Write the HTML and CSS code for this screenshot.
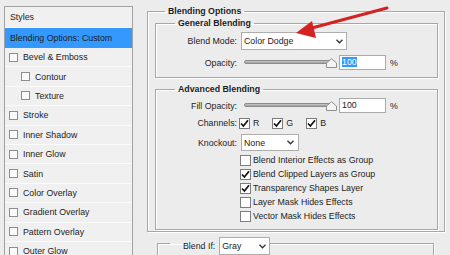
FILE: index.html
```html
<!DOCTYPE html>
<html lang="en">
<head>
    <meta charset="UTF-8">
    <meta name="viewport" content="width=device-width, initial-scale=1.0">
    <title>Layer Style - Blending Options</title>
    <link rel="stylesheet" href="styles.css">
</head>
<body>
    <div class="dialog">
        <div class="styles-panel">
            <div class="panel-head">Styles</div>
            <div class="style-item active">Blending Options: Custom</div>
            <div class="style-item"><span class="box"></span>Bevel &amp; Emboss</div>
            <div class="style-item sub"><span class="box"></span>Contour</div>
            <div class="style-item sub"><span class="box"></span>Texture</div>
            <div class="style-item"><span class="box"></span>Stroke</div>
            <div class="style-item"><span class="box"></span>Inner Shadow</div>
            <div class="style-item"><span class="box"></span>Inner Glow</div>
            <div class="style-item"><span class="box"></span>Satin</div>
            <div class="style-item"><span class="box"></span>Color Overlay</div>
            <div class="style-item"><span class="box"></span>Gradient Overlay</div>
            <div class="style-item"><span class="box"></span>Pattern Overlay</div>
            <div class="style-item"><span class="box"></span>Outer Glow</div>
        </div>

        <div class="options">
            <fieldset class="group outer">
                <legend>Blending Options</legend>

                <fieldset class="group inner general">
                    <legend>General Blending</legend>
                    <div class="row row-select">
                        <span class="row-label">Blend Mode:</span>
                        <div class="select mode">Color Dodge
                            <svg width="7" height="5" viewBox="0 0 7 5"><polyline points="0.5,0.8 3.5,3.8 6.5,0.8" fill="none" stroke="#333" stroke-width="1.3"/></svg>
                        </div>
                    </div>
                    <div class="row row-slider first">
                        <span class="row-label">Opacity:</span>
                        <div class="slider">
                            <div class="track"></div>
                            <svg class="thumb" width="11" height="10" viewBox="0 0 11 10"><path d="M0.5 9.5 V5 L5.5 0.7 L10.5 5 V9.5 Z" fill="#f4f4f4" stroke="#8f8f8f"/></svg>
                        </div>
                        <div class="num"><span class="selected">100</span></div>
                        <span class="pct">%</span>
                    </div>
                </fieldset>

                <fieldset class="group inner advanced">
                    <legend>Advanced Blending</legend>
                    <div class="row row-slider">
                        <span class="row-label">Fill Opacity:</span>
                        <div class="slider">
                            <div class="track"></div>
                            <svg class="thumb" width="11" height="10" viewBox="0 0 11 10"><path d="M0.5 9.5 V5 L5.5 0.7 L10.5 5 V9.5 Z" fill="#f4f4f4" stroke="#8f8f8f"/></svg>
                        </div>
                        <div class="num">100</div>
                        <span class="pct">%</span>
                    </div>
                    <div class="row row-channels">
                        <span class="row-label">Channels:</span>
                        <span class="channel"><span class="cb"><svg width="9" height="9" viewBox="0 0 9 9"><polyline points="1,4.5 3.4,7 8,1.3" fill="none" stroke="#111" stroke-width="1.7"/></svg></span>R</span>
                        <span class="channel"><span class="cb"><svg width="9" height="9" viewBox="0 0 9 9"><polyline points="1,4.5 3.4,7 8,1.3" fill="none" stroke="#111" stroke-width="1.7"/></svg></span>G</span>
                        <span class="channel"><span class="cb"><svg width="9" height="9" viewBox="0 0 9 9"><polyline points="1,4.5 3.4,7 8,1.3" fill="none" stroke="#111" stroke-width="1.7"/></svg></span>B</span>
                    </div>
                    <div class="row row-knockout">
                        <span class="row-label">Knockout:</span>
                        <div class="select knockout">None
                            <svg width="7" height="5" viewBox="0 0 7 5"><polyline points="0.5,0.8 3.5,3.8 6.5,0.8" fill="none" stroke="#333" stroke-width="1.3"/></svg>
                        </div>
                    </div>
                    <div class="check-list">
                        <div class="check-row"><span class="cb"></span>Blend Interior Effects as Group</div>
                        <div class="check-row"><span class="cb"><svg width="9" height="9" viewBox="0 0 9 9"><polyline points="1,4.5 3.4,7 8,1.3" fill="none" stroke="#111" stroke-width="1.7"/></svg></span>Blend Clipped Layers as Group</div>
                        <div class="check-row"><span class="cb"><svg width="9" height="9" viewBox="0 0 9 9"><polyline points="1,4.5 3.4,7 8,1.3" fill="none" stroke="#111" stroke-width="1.7"/></svg></span>Transparency Shapes Layer</div>
                        <div class="check-row"><span class="cb"></span>Layer Mask Hides Effects</div>
                        <div class="check-row"><span class="cb"></span>Vector Mask Hides Effects</div>
                    </div>
                </fieldset>
            </fieldset>

            <fieldset class="group blendif">
                <legend>
                    <span class="blendif-label">Blend If:</span>
                    <span class="select gray">Gray
                        <svg width="7" height="5" viewBox="0 0 7 5"><polyline points="0.5,0.8 3.5,3.8 6.5,0.8" fill="none" stroke="#333" stroke-width="1.3"/></svg>
                    </span>
                </legend>
            </fieldset>
        </div>
    </div>

    <svg class="arrow" width="450" height="255" viewBox="0 0 450 255">
        <line x1="387" y1="8" x2="308" y2="29" stroke="#d42222" stroke-width="3" stroke-linecap="round"/>
        <polygon points="296,33 312,21 316,38" fill="#d42222"/>
    </svg>
</body>
</html>
```

FILE: styles.css
```css
* {
    box-sizing: border-box;
}
body {
    position: relative;
    margin: 0;
    width: 450px;
    height: 255px;
    overflow: hidden;
    background-color: #ececec;
    font-family: "Liberation Sans", Arial, sans-serif;
    font-size: 8.8px;
    color: #1c1c1c;
}
.dialog {
    display: flex;
    align-items: flex-start;
    padding: 6px 0 0 4px;
}

/* left list of styles */
.styles-panel {
    flex: none;
    width: 129px;
    border: 1px solid #a2a2a2;
    background-color: #f0f0f0;
}
.panel-head {
    height: 21px;
    line-height: 20px;
    padding-left: 5px;
    border-bottom: 1px solid #fbfbfb;
}
.style-item {
    display: flex;
    align-items: center;
    height: 19.4px;
    padding-left: 4px;
    border-bottom: 1px solid #fbfbfb;
}
.style-item.active {
    height: 20px;
    padding-left: 5px;
    background-color: #3399ff;
    border-bottom: 0;
}
.style-item.sub {
    padding-left: 16px;
}
.box {
    flex: none;
    width: 9px;
    height: 9px;
    margin-right: 5px;
    border: 1px solid #8d8d8d;
    background-color: #fbfbfb;
}

/* right side */
.options {
    flex: none;
    width: 298px;
    margin-left: 14px;
    margin-top: -1px;
}
.group {
    margin: 0;
    padding: 0;
    min-width: 0;
    border: 1px solid #a6a6a6;
    box-shadow: 1px 1px 0 #fff, inset 1px 1px 0 #fff;
}
.group legend {
    padding: 0 3px;
    line-height: 12px;
    font-weight: bold;
}
.outer {
    padding: 0 6px 1px 7px;
}
.outer > legend {
    margin-left: 10px;
}
.inner > legend {
    margin-left: 19px;
}
.general {
    padding-bottom: 7px;
}
.advanced {
    margin-top: 5px;
    padding-bottom: 6px;
}

.row {
    display: flex;
    align-items: center;
}
.row-label {
    flex: none;
    width: 81px;
    margin-right: 2px;
    text-align: right;
}
.row-select {
    margin-top: 3px;
    height: 18px;
}
.row-slider {
    margin-top: 3px;
    height: 15px;
}
.row-slider.first {
    margin-top: 5px;
}
.row-channels {
    margin-top: 3px;
    height: 14px;
}
.row-knockout {
    margin-top: 4px;
    height: 17px;
}

.select {
    display: flex;
    align-items: center;
    justify-content: space-between;
    height: 18px;
    margin-left: 2px;
    padding: 0 3px 0 2px;
    border: 1px solid #adadad;
    background-color: #fff;
    font-weight: normal;
}
.select.mode {
    width: 106px;
}
.select.knockout {
    width: 58px;
    height: 17px;
    padding-right: 4px;
}

.slider {
    position: relative;
    flex: none;
    width: 98px;
    height: 15px;
}
.track {
    margin: 5px 0 0 5px;
    width: 88px;
    height: 4px;
    border: 1px solid #8c8c8c;
    border-radius: 2px;
    background: linear-gradient(#c9c9c9, #9d9d9d);
}
.thumb {
    position: absolute;
    left: 87px;
    top: 3px;
}
.num {
    flex: none;
    width: 47px;
    height: 15px;
    margin-left: 2px;
    padding-left: 2px;
    line-height: 13px;
    border: 1px solid #a9a9a9;
    background-color: #fff;
}
.selected {
    background-color: #3399ff;
    color: #fff;
}
.pct {
    margin-left: 4px;
}

.cb {
    flex: none;
    display: flex;
    align-items: center;
    justify-content: center;
    width: 11px;
    height: 11px;
    border: 1px solid #7c7c7c;
    background-color: #fff;
}
.channel {
    display: flex;
    align-items: center;
    margin-right: 13px;
}
.channel .cb {
    margin-right: 3px;
}
.check-list {
    margin: 2px 0 0 84px;
}
.check-row {
    display: flex;
    align-items: center;
    height: 14px;
}
.check-row .cb {
    margin-right: 2px;
}

.blendif {
    width: 277px;
    height: 30px;
    margin: 5px 0 0 10px;
}
.blendif legend {
    display: flex;
    align-items: flex-start;
    height: 12px;
    margin-left: 12px;
    padding: 0 0 0 13px;
    font-weight: normal;
}
.blendif-label {
    line-height: 18px;
}
.select.gray {
    width: 51px;
    margin-left: 4px;
    padding-right: 3px;
}

.arrow {
    position: absolute;
    left: 0;
    top: 0;
    pointer-events: none;
}
```
